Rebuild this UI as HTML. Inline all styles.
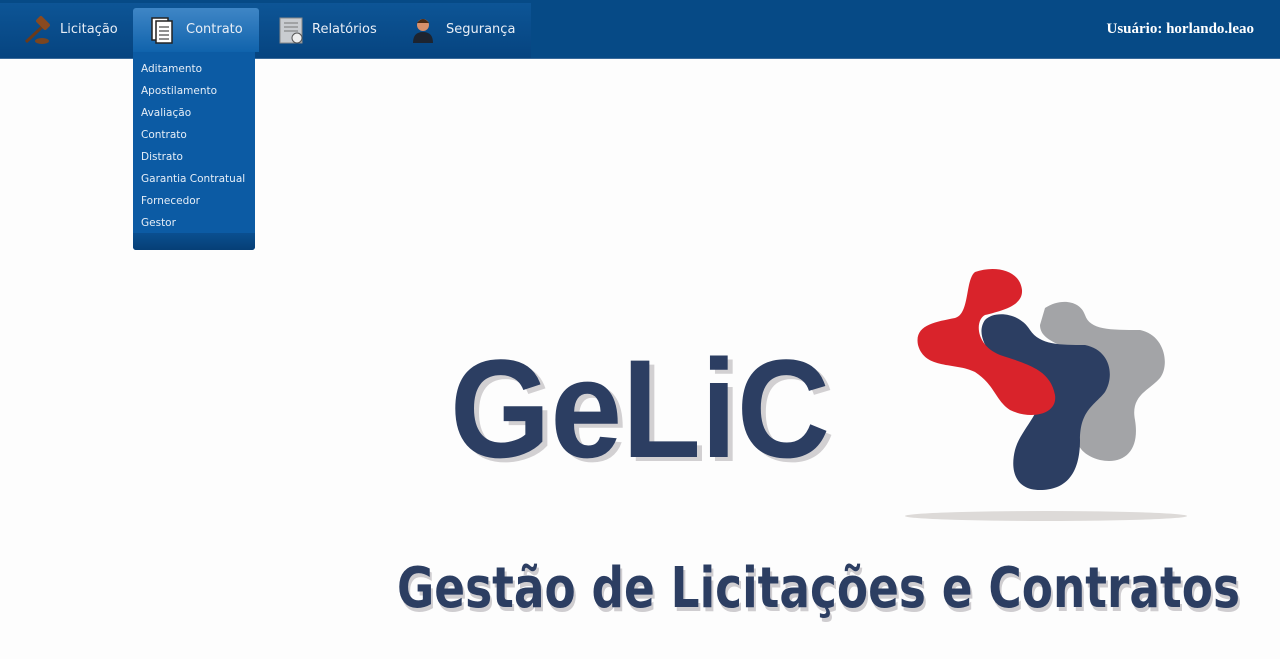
<!DOCTYPE html>
<html><head><meta charset="utf-8"><style>
body{margin:0;width:1280px;height:659px;background:#fdfdfd;position:relative;overflow:hidden;font-family:"Liberation Sans",sans-serif}
.bar{position:absolute;left:0;top:0;width:1280px;height:58px;background:#064a86;border-bottom:1px solid #3a6a9a}
.menu{position:absolute;left:0;top:3px;width:531px;height:55px;background:linear-gradient(#0d5596,#064480)}
.item{position:absolute;top:22px;color:#e8eef6;font-size:13px;font-family:"DejaVu Sans",sans-serif;letter-spacing:0px}
.act{position:absolute;left:133px;top:8px;width:126px;height:44px;background:linear-gradient(#3f86c6,#1063ac);border-radius:3px 3px 0 0}
.dd{position:absolute;left:133px;top:52px;width:122px;height:198px;background:#0c5ba4;border-radius:0 0 3px 3px}
.dd .foot{position:absolute;left:0;bottom:0;width:122px;height:17px;background:linear-gradient(#0a4f90,#063f76);border-radius:0 0 3px 3px}
.dd div.t{position:absolute;left:8px;color:#e6eef7;font-size:10.5px;font-family:"DejaVu Sans",sans-serif}
.user{position:absolute;right:26px;top:21px;color:#fff;font-family:"Liberation Serif",serif;font-size:15px;font-weight:bold}
</style></head><body>
<div class="bar"></div>
<div class="menu"></div>
<div class="act"></div>
<div class="dd">
<div class="t" style="top:11px">Aditamento</div>
<div class="t" style="top:33px">Apostilamento</div>
<div class="t" style="top:55px">Avaliação</div>
<div class="t" style="top:77px">Contrato</div>
<div class="t" style="top:99px">Distrato</div>
<div class="t" style="top:121px">Garantia Contratual</div>
<div class="t" style="top:143px">Fornecedor</div>
<div class="t" style="top:165px">Gestor</div>
<div class="foot"></div>
</div>
<svg style="position:absolute;left:0;top:0" width="531" height="58">
<g><line x1="26" y1="42" x2="42" y2="27" stroke="#6b3a1a" stroke-width="3"/><rect x="36" y="19" width="14" height="8" rx="2" fill="#8a4a20" transform="rotate(45 43 23)"/><ellipse cx="42" cy="41" rx="7" ry="3" fill="#7a4520"/></g>
<g><rect x="152" y="18" width="16" height="22" fill="#fff" stroke="#222" stroke-width="1.5"/><rect x="156" y="21" width="16" height="22" fill="#fff" stroke="#222" stroke-width="1.5"/><line x1="159" y1="27" x2="169" y2="27" stroke="#222"/><line x1="159" y1="31" x2="169" y2="31" stroke="#222"/><line x1="159" y1="35" x2="169" y2="35" stroke="#222"/><line x1="159" y1="39" x2="169" y2="39" stroke="#222"/></g>
<g><rect x="280" y="18" width="22" height="25" fill="#c9ccd0" stroke="#888"/><line x1="284" y1="23" x2="298" y2="23" stroke="#777"/><line x1="284" y1="27" x2="298" y2="27" stroke="#777"/><line x1="284" y1="31" x2="298" y2="31" stroke="#777"/><circle cx="297" cy="38" r="5" fill="#eee" stroke="#555"/></g>
<g><circle cx="423" cy="25" r="6" fill="#d9906a"/><path d="M413 43 Q413 32 423 32 Q433 32 433 43 Z" fill="#1d2430"/><path d="M417 23 Q423 15 429 23 Z" fill="#4a2a14"/></g>
</svg>
<div class="item" style="left:60px">Licitação</div>
<div class="item" style="left:186px">Contrato</div>
<div class="item" style="left:312px">Relatórios</div>
<div class="item" style="left:446px">Segurança</div>
<div class="user">Usuário: horlando.leao</div>
<svg style="position:absolute;left:0;top:0" width="1280" height="659">
<text x="455" y="461" font-family="Liberation Sans" font-weight="bold" font-size="140" fill="#d2d0d2" textLength="380" lengthAdjust="spacingAndGlyphs">GeLiC</text>
<text x="450" y="457" font-family="Liberation Sans" font-weight="bold" font-size="140" fill="#2c3e62" textLength="380" lengthAdjust="spacingAndGlyphs">GeLiC</text>
<text x="399" y="611" font-family="DejaVu Sans" font-weight="bold" font-size="56" fill="#cfcdd0" textLength="843" lengthAdjust="spacingAndGlyphs">Gestão de Licitações e Contratos</text>
<text x="397" y="607" font-family="DejaVu Sans" font-weight="bold" font-size="56" fill="#2c3e62" textLength="843" lengthAdjust="spacingAndGlyphs">Gestão de Licitações e Contratos</text>
<ellipse cx="1046" cy="516" rx="141" ry="5" fill="#dddad8"/>
<path d="M1045 308 C1060 298 1080 300 1085 315 C1090 330 1110 330 1140 330 C1165 335 1170 365 1160 378 C1150 390 1130 395 1135 420 C1140 450 1125 465 1100 460 C1080 455 1070 440 1080 420 C1090 400 1100 380 1090 365 C1075 345 1040 345 1040 325 Z" fill="#a3a4a7"/>
<path d="M985 320 C995 310 1020 313 1030 330 C1040 345 1060 345 1085 345 C1110 350 1115 375 1105 392 C1095 405 1080 410 1080 440 C1080 475 1065 490 1040 490 C1015 490 1010 470 1015 450 C1020 430 1045 410 1040 390 C1035 370 1005 368 992 355 C982 343 978 330 985 320 Z" fill="#2c3e62"/>
<path d="M975 272 C995 265 1020 270 1022 290 C1023 305 1005 310 985 315 C975 320 975 345 1000 355 C1030 365 1050 370 1055 395 C1058 415 1030 420 1010 410 C995 400 995 385 975 372 C955 362 925 370 918 345 C914 325 935 322 955 318 C970 314 965 280 975 272 Z" fill="#d9232b"/>
</svg>
</body></html>
